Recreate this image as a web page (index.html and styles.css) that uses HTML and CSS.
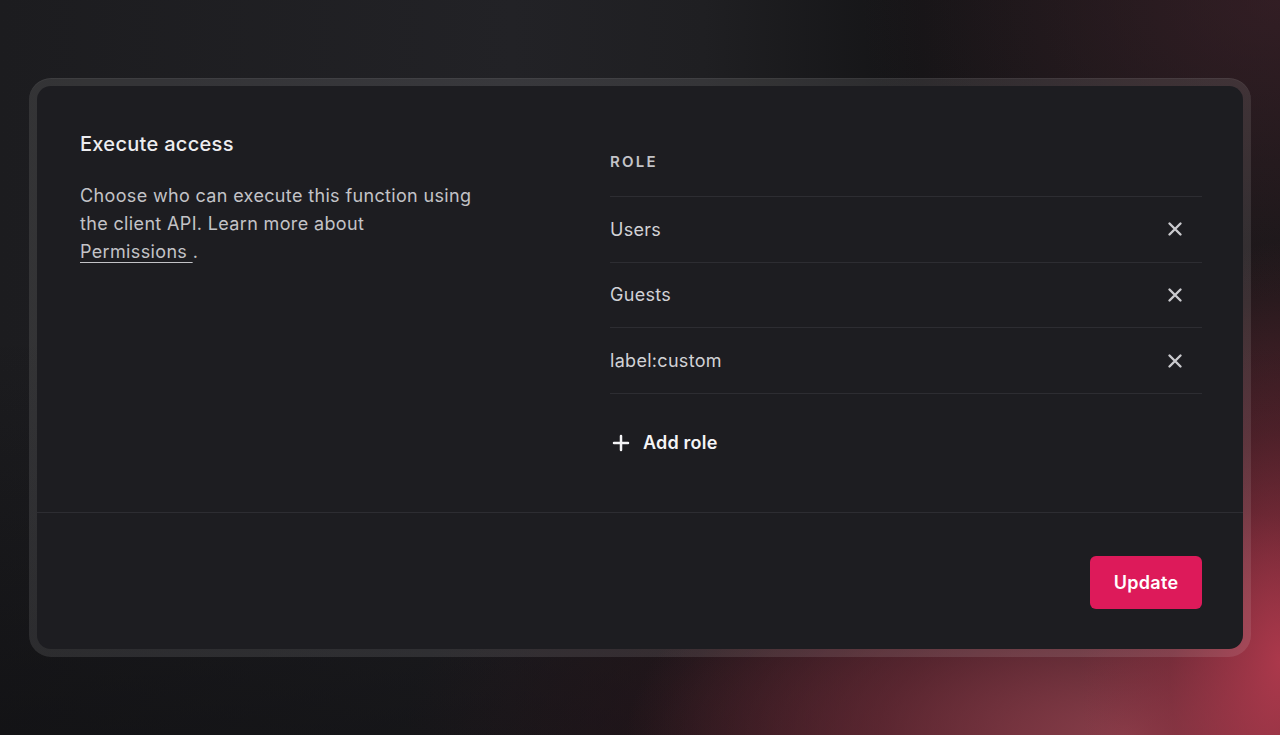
FILE: index.html
```html
<!DOCTYPE html>
<html lang="en">
<head>
<meta charset="utf-8">
<title>Execute access</title>
<link rel="stylesheet" href="styles.css">
</head>
<body>
<div class="page">
  <div class="frame">
    <div class="card">
      <div class="card-body">
        <div class="intro">
          <h2 class="title">Execute access</h2>
          <p class="desc">Choose who can execute this function using the client API. Learn more about <span class="nowrap"><a class="link" href="#">Permissions </a>.</span></p>
        </div>
        <div class="roles">
          <div class="roles-head">ROLE</div>
          <div class="role-row">
            <span class="role-name">Users</span>
            <button class="remove" aria-label="Remove">
              <svg width="16" height="16" viewBox="0 0 16 16"><path d="M2.5 2.5L13.5 13.5M13.5 2.5L2.5 13.5" stroke="currentColor" stroke-width="2.4" stroke-linecap="round"/></svg>
            </button>
          </div>
          <div class="role-row">
            <span class="role-name">Guests</span>
            <button class="remove" aria-label="Remove">
              <svg width="16" height="16" viewBox="0 0 16 16"><path d="M2.5 2.5L13.5 13.5M13.5 2.5L2.5 13.5" stroke="currentColor" stroke-width="2.4" stroke-linecap="round"/></svg>
            </button>
          </div>
          <div class="role-row">
            <span class="role-name">label:custom</span>
            <button class="remove" aria-label="Remove">
              <svg width="16" height="16" viewBox="0 0 16 16"><path d="M2.5 2.5L13.5 13.5M13.5 2.5L2.5 13.5" stroke="currentColor" stroke-width="2.4" stroke-linecap="round"/></svg>
            </button>
          </div>
          <button class="add-role">
            <svg width="18" height="18" viewBox="0 0 18 18"><path d="M9 2V16M2 9H16" stroke="currentColor" stroke-width="2.5" stroke-linecap="round"/></svg>
            <span>Add role</span>
          </button>
        </div>
      </div>
      <div class="card-footer">
        <button class="update">Update</button>
      </div>
    </div>
  </div>
</div>
</body>
</html>
```

FILE: styles.css
```css
* { box-sizing: border-box; }
html, body { margin: 0; height: 100%; }
body {
  font-family: Inter, "Noto Sans", "Liberation Sans", sans-serif;
  background-color: #18181b;
  background-image:
    radial-gradient(ellipse 200px 420px at 100% 90%, rgba(180, 58, 78, 0.9) 0%, rgba(140, 45, 62, 0.45) 55%, rgba(60, 20, 30, 0) 100%),
    radial-gradient(ellipse 500px 230px at 88% 100%, rgba(140, 64, 76, 0.95) 0%, rgba(115, 48, 60, 0.6) 50%, rgba(60, 20, 30, 0) 100%),
    radial-gradient(ellipse 620px 280px at 80% 100%, rgba(75, 28, 38, 0.85) 0%, rgba(45, 20, 27, 0.45) 60%, rgba(20, 18, 20, 0) 100%),
    radial-gradient(ellipse 420px 300px at 100% 0%, rgba(70, 35, 45, 0.55) 0%, rgba(40, 25, 30, 0) 100%),
    linear-gradient(180deg, rgba(0, 0, 0, 0) 45%, rgba(8, 8, 10, 0.45) 100%),
    linear-gradient(90deg, #1c1c1f 0%, #222226 40%, #1f1f22 55%, #141416 72%, #1a1719 100%);
  overflow: hidden;
}
.page {
  height: 735px;
  padding: 78px 29px;
}
.frame {
  padding: 8px;
  border-radius: 22px;
  background: rgba(255, 255, 255, 0.1);
  box-shadow: inset 0 1px 0 rgba(255, 255, 255, 0.05);
}
.card {
  background: #1d1d21;
  border-radius: 14px;
  height: 563px;
  display: flex;
  flex-direction: column;
}
.card-body {
  display: grid;
  grid-template-columns: 490px 1fr;
  column-gap: 40px;
  padding: 44px 41px 49px 43px;
  border-bottom: 1px solid #2d2d32;
}
.title {
  margin: 0;
  font-size: 20px;
  line-height: 28px;
  font-weight: 500;
  color: #ededf0;
  letter-spacing: 0.3px;
}
.desc {
  margin: 24px 0 0;
  max-width: 405px;
  font-size: 18px;
  line-height: 28px;
  color: #c3c3c7;
  letter-spacing: 0.35px;
}
.nowrap { white-space: nowrap; }
.link {
  color: #c3c3c7;
  text-decoration: underline;
  text-underline-offset: 4px;
  text-decoration-thickness: 1px;
}
.roles-head {
  height: 67px;
  padding-bottom: 4px;
  display: flex;
  align-items: center;
  font-size: 15px;
  font-weight: 600;
  letter-spacing: 2.2px;
  color: #c4c4c8;
  border-bottom: 1px solid #2d2d32;
}
.role-row {
  height: 65.67px;
  display: flex;
  align-items: center;
  justify-content: space-between;
  border-bottom: 1px solid #2d2d32;
}
.role-name {
  font-size: 18px;
  color: #d2d2d6;
  letter-spacing: 0.3px;
}
.remove {
  background: none;
  border: 0;
  padding: 0;
  margin-right: 19px;
  width: 16px;
  height: 16px;
  color: #cacace;
  display: flex;
  cursor: pointer;
}
.add-role {
  margin-top: 29px;
  height: 40px;
  display: flex;
  align-items: center;
  gap: 13px;
  background: none;
  border: 0;
  padding: 0 0 0 2px;
  color: #f4f4f6;
  font-family: inherit;
  font-size: 18px;
  font-weight: 600;
  letter-spacing: 0.2px;
  cursor: pointer;
}
.card-footer {
  flex: 1;
  display: flex;
  justify-content: flex-end;
  padding: 43px 41px 40px;
}
.update {
  width: 112px;
  height: 53px;
  border: 0;
  border-radius: 6px;
  background: #dd1a5a;
  color: #ffffff;
  font-family: inherit;
  font-size: 18px;
  font-weight: 600;
  letter-spacing: 0.3px;
  cursor: pointer;
}
```
